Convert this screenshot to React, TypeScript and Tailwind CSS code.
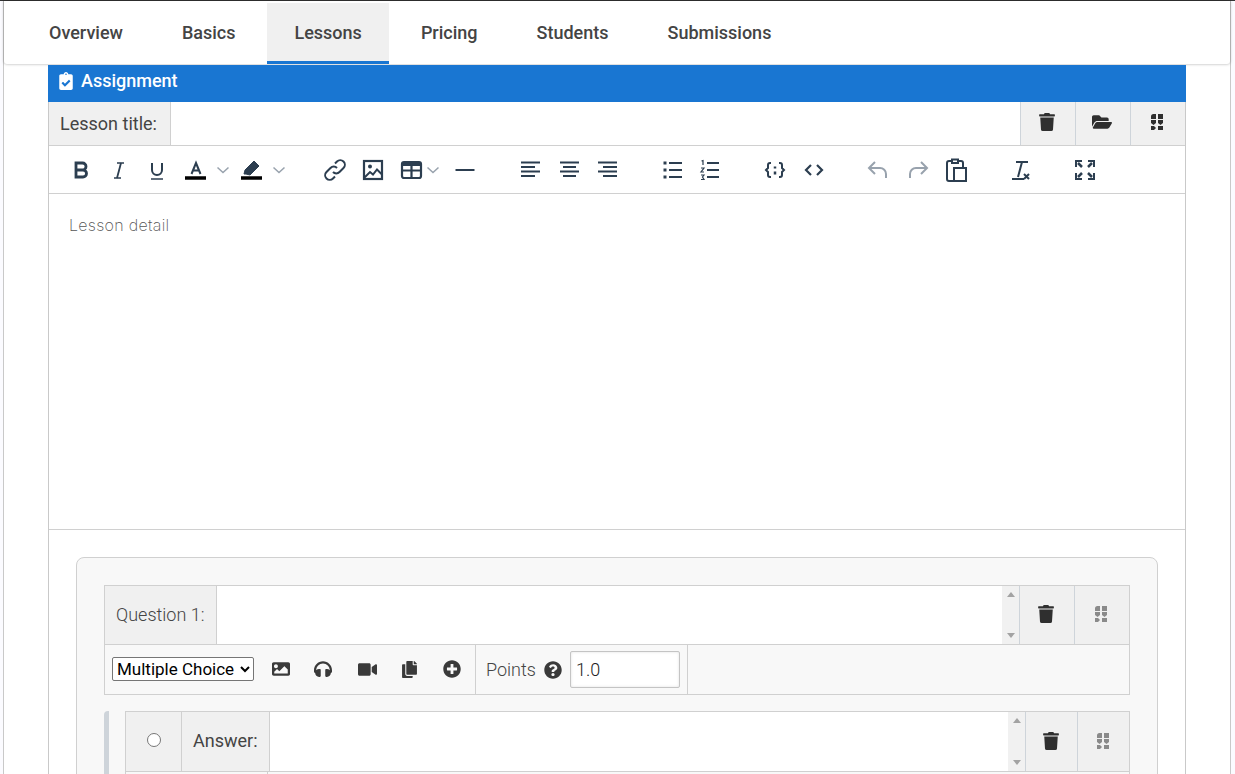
import { FaClipboardCheck, FaCopy, FaFolderOpen, FaHeadphones, FaImage, FaPlusCircle, FaQuestionCircle, FaTrash, FaVideo } from "react-icons/fa";

const ink = "#2c3e50";
const muted = "#98a2ad";

// drag handle, two columns of three blocks
const Grip = ({ color }: { color: string }) => (
  <svg width="12" height="16" viewBox="0 0 12 16" fill={color}>
    <path d="M0 2.500A2.500 2.500 0 0 1 2.500 0H5v5H0zM7 0h5v5H7zM0 6h5v3l-2.500 2L0 9zM7 6h5v3l-2.500 2L7 9zM0 12h3l2 2-2 2H0zM7 12h5v4H7z" />
  </svg>
);

const Tool = ({ children, w = 38 }: { children: React.ReactNode; w?: number }) => (
  <span className="flex h-[24px] shrink-0 items-center justify-center" style={{ width: w }}>
    <svg width="24" height="24" viewBox="0 0 24 24" fill="none" stroke={ink} strokeWidth="2" className="shrink-0">
      {children}
    </svg>
  </span>
);

const Caret = () => (
  <svg width="14" height="14" viewBox="0 0 14 14" fill="none" stroke={muted} strokeWidth="1.500" className="shrink-0">
    <path d="M1.500 4.500l5.500 5 5.500-5" />
  </svg>
);

const Spinner = () => (
  <div className="flex w-[17px] shrink-0 flex-col items-center justify-between self-stretch bg-[#f1f1f1] py-[6px]">
    <span className="h-0 w-0 border-x-[4px] border-b-[5px] border-x-transparent border-b-[#a3a3a3]" />
    <span className="h-0 w-0 border-x-[4px] border-t-[5px] border-x-transparent border-t-[#a3a3a3]" />
  </div>
);

const IconCell = ({ children, w }: { children: React.ReactNode; w: string }) => (
  <div className={`flex shrink-0 items-center justify-center border-l border-[#ced4da] bg-[#f0f0f0] pb-[2px] pr-[2px] ${w}`}>{children}</div>
);

const tabs = [
  { label: "Overview", cls: "pl-[27px] pr-[32px] border-transparent" },
  { label: "Basics", cls: "pl-[27px] pr-[32px] border-transparent" },
  { label: "Lessons", cls: "px-[27px] border-[#1976d2] bg-[#f0f0f0]" },
  { label: "Pricing", cls: "px-[32px] border-transparent" },
  { label: "Students", cls: "pl-[27px] pr-[32px] border-transparent" },
  { label: "Submissions", cls: "px-[27px] border-transparent" },
];

export default function App() {
  return (
    <div className="h-[774px] overflow-hidden bg-[#fbfbff] font-['Roboto',sans-serif] text-[#444]">
      <div className="h-px bg-[#333]" />
      <div className="ml-[3px] mr-[4px] h-[773px] border-x border-[#c9c9c9] bg-white">
        <nav className="flex h-[63px] rounded-b-[3px] bg-white pl-[18px] pt-[2px] shadow-[0_0_3px_rgba(0,0,0,0.35)]">
          {tabs.map((t) => (
            <a key={t.label} className={`flex items-center border-b-[3px] text-[18px] font-medium ${t.cls}`}>
              {t.label}
            </a>
          ))}
        </nav>

        <div className="ml-[44px] mr-[44px] mt-px">
          <div className="flex h-[37px] items-center gap-[6px] bg-[#1976d2] pb-[6px] pl-[9px] text-[18px] font-medium text-white">
            <FaClipboardCheck className="text-[18px]" />
            Assignment
          </div>

          <div className="border-x border-[#c9c9c9]">
            <div className="flex h-[44px] border-b border-[#d0d0d0]">
              <div className="flex w-[122px] items-center border-r border-[#d0d0d0] bg-[#f0f0f0] pl-[11px] text-[18px]">Lesson title:</div>
              <div className="flex-1" />
              <IconCell w="w-[55px]"><FaTrash className="mb-[2px] text-[18px] text-[#2f2f2f]" /></IconCell>
              <IconCell w="w-[55px]"><FaFolderOpen className="mb-[2px] text-[20px] text-[#2f2f2f]" /></IconCell>
              <IconCell w="w-[55px]"><span className="mb-[2px]"><Grip color="#2f2f2f" /></span></IconCell>
            </div>

            <div className="flex h-[48px] items-center border-b border-[#d0d0d0] pl-[13px]">
              <Tool><path d="M7 5h6.500a3.500 3.500 0 0 1 0 7H7zM7 12h7a3.500 3.500 0 0 1 0 7H7z" strokeWidth="2.800" /></Tool>
              <Tool><path d="M10 5h7M7 20h7" strokeWidth="1.300" /><path d="M14 5l-4 15" strokeWidth="1.800" /></Tool>
              <Tool><path d="M7 5v7a5 5 0 0 0 10 0V5" /><path d="M6 21h12" strokeWidth="1.500" /></Tool>
              <span className="w-px" />
              <Tool><path d="M7.500 16l4.500-11 4.500 11M9 12.500h6" /><path d="M1 20h21" stroke="#000" strokeWidth="3.500" /></Tool>
              <span className="ml-px"><Caret /></span>
              <span className="w-[3px]" />
              <Tool><path d="M4 16l1-4 9-9 5 5-9 9-4-1z" fill={ink} strokeWidth="1" /><path d="M1 20h21" stroke="#000" strokeWidth="3.500" /></Tool>
              <span className="ml-px"><Caret /></span>
              <span className="w-[30px]" />
              <Tool><path d="M10 14a4.500 4.500 0 0 0 6.500 0l4-4a4.500 4.500 0 0 0-6.500-6.500l-2 2M14 10a4.500 4.500 0 0 0-6.500 0l-4 4a4.500 4.500 0 0 0 6.500 6.500l2-2" /></Tool>
              <Tool><rect x="3" y="3" width="18" height="18" strokeWidth="2.200" /><circle cx="9" cy="8.500" r="2" fill={ink} stroke="none" /><path d="M3 20l6-6 3 2.500 4-5 5 5" /></Tool>
              <span className="w-[5px]" />
              <Tool w={30}><rect x="2" y="4" width="19" height="16" rx="2" strokeWidth="2.200" /><path d="M2 6h19" strokeWidth="4" /><path d="M2 12.500h19M11.500 6v14" strokeWidth="2.200" /></Tool>
              <span className="-ml-[1px]"><Caret /></span>
              <span className="w-[6px]" />
              <Tool><path d="M2.500 12h19" /></Tool>
              <span className="w-[27px]" />
              <Tool><path d="M3 4.500h19M3 9h14M3 13.500h19M3 18h14" /></Tool>
              <span className="w-px" />
              <Tool><path d="M3 4.500h19M6 9h13M3 13.500h19M6 18h13" /></Tool>
              <Tool><path d="M3 4.500h19M8 9h14M3 13.500h19M8 18h14" /></Tool>
              <span className="w-[27px]" />
              <Tool><path d="M9 5h13M9 12h13M9 19h13" /><path d="M3.500 5h3M3.500 12h3M3.500 19h3" strokeWidth="3" /></Tool>
              <Tool><path d="M9 5h12M9 12h12M9 19h12" /><path d="M3.500 3l1.500-.5V7M3 10h3l-3 4h3M3 17h3l-1.500 2 1.500 2.500H3" strokeWidth="1.200" /></Tool>
              <span className="w-[27px]" />
              <Tool><path d="M8 5H7a2 2 0 0 0-2 2v3l-2 2 2 2v3a2 2 0 0 0 2 2h1M16 5h1a2 2 0 0 1 2 2v3l2 2-2 2v3a2 2 0 0 1-2 2h-1" /><path d="M12 8.500v2M12 13.500v3" strokeWidth="2.500" /></Tool>
              <span className="w-px" />
              <Tool><path d="M9 7l-5 5 5 5M15 7l5 5-5 5" strokeWidth="2.200" /></Tool>
              <span className="w-[27px]" />
              <Tool><g stroke={muted}><path d="M8 4l-6 6 6 6M2 10h11a6 6 0 0 1 6 6v4" /></g></Tool>
              <Tool><g stroke={muted}><path d="M16 4l6 6-6 6M22 10H11a6 6 0 0 0-6 6v4" /></g></Tool>
              <span className="w-px" />
              <Tool><rect x="3" y="3" width="16" height="20" rx="2" /><rect x="10" y="10" width="12" height="13" fill="white" /><path d="M8 5V1.500h6V5z" fill="white" /></Tool>
              <span className="w-[26px]" />
              <Tool><path d="M8 4h12M14 4l-4 15M4 21h12" /><path d="M16 16l5 5M21 16l-5 5" /></Tool>
              <span className="w-[27px]" />
              <Tool><path d="M3 9V3h6M15 3h6v6M21 15v6h-6M9 21H3v-6" strokeWidth="2" /><path d="M5 5l4 4M19 5l-4 4M19 19l-4-4M5 19l4-4" strokeWidth="2.500" /></Tool>
            </div>

            <div className="h-[336px] border-b border-[#d0d0d0] pl-[20px] pt-[19px] font-['Inter',sans-serif] text-[16px] font-extralight tracking-[0.3px] text-[#555]">Lesson detail</div>

            <div className="px-[27px] pt-[27px]">
              <div className="h-[260px] rounded-t-[8px] border border-[#d0d0d0] bg-[#f8f8f8] px-[27px] pt-[27px]">
                <div className="border border-[#d0d0d0]">
                  <div className="flex h-[59px] border-b border-[#d0d0d0]">
                    <div className="flex w-[112px] items-center border-r border-[#d0d0d0] bg-[#f0f0f0] pb-[2px] pl-[11px] text-[18px] font-light">Question 1:</div>
                    <div className="flex-1 bg-white" />
                    <Spinner />
                    <IconCell w="w-[55px]"><FaTrash className="text-[18px] text-[#2f2f2f]" /></IconCell>
                    <IconCell w="w-[55px]"><Grip color="#8a8a8a" /></IconCell>
                  </div>
                  <div className="flex h-[49px] items-center">
                    <div className="flex h-full w-[371px] items-center border-r border-[#d0d0d0] pb-[1px] pl-[7px]">
                      <select className="h-[24px] w-[142px] rounded-[2px] border border-[#767676] bg-white font-['Roboto',sans-serif] text-[17px] text-black">
                        <option>Multiple Choice</option>
                      </select>
                      <FaImage className="ml-[18px] text-[18px] text-[#3a3a3a]" />
                      <FaHeadphones className="ml-[24px] text-[18px] text-[#3a3a3a]" />
                      <FaVideo className="ml-[26px] text-[19px] text-[#3a3a3a]" />
                      <FaCopy className="ml-[24px] text-[17px] text-[#3a3a3a]" />
                      <FaPlusCircle className="ml-[25px] text-[18px] text-[#3a3a3a]" />
                    </div>
                    <div className="flex h-full w-[212px] items-center border-r border-[#d0d0d0] pl-[10px] text-[18px] font-light">
                      Points
                      <FaQuestionCircle className="ml-[8px] text-[18px] text-[#3a3a3a]" />
                      <input
                        readOnly
                        value="1.0"
                        className="ml-[8px] h-[37px] w-[110px] rounded-[2px] border border-[#c4c4c4] bg-white pl-[5px] text-[18px] text-[#222] shadow-[inset_0_0_3px_rgba(0,0,0,0.12)]"
                      />
                    </div>
                  </div>
                </div>

                <div className="mt-[16px] flex">
                  <div className="w-[5px] rounded-tl-[4px] bg-[#ced4da]" />
                  <div className="ml-[16px] flex-1 border border-b-0 border-[#d0d0d0]">
                    <div className="flex h-[60px] border-b border-[#d0d0d0]">
                      <div className="flex w-[56px] items-center justify-center border-r border-[#d0d0d0] bg-[#f0f0f0] pb-[4px]">
                        <span className="h-[14px] w-[14px] rounded-full border border-[#767676] bg-white" />
                      </div>
                      <div className="flex w-[88px] items-center border-r border-[#d0d0d0] bg-[#f0f0f0] pb-[3px] pl-[11px] text-[18px]">Answer:</div>
                      <div className="flex-1 bg-white" />
                      <Spinner />
                      <IconCell w="w-[52px]"><FaTrash className="text-[18px] text-[#2f2f2f]" /></IconCell>
                      <IconCell w="w-[52px]"><Grip color="#8a8a8a" /></IconCell>
                    </div>
                    <div className="flex h-[10px]">
                      <div className="w-[142px] border-r border-[#d0d0d0]" />
                    </div>
                  </div>
                </div>
              </div>
            </div>
          </div>
        </div>
      </div>
    </div>
  );
}
